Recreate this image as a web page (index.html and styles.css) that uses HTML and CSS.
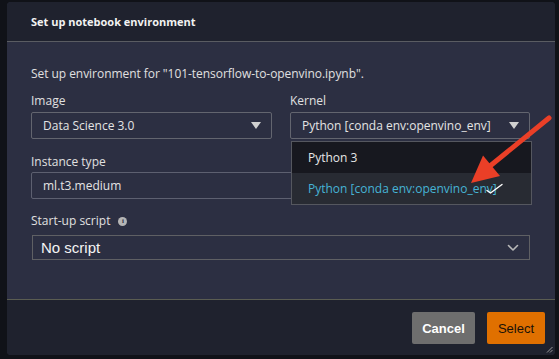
FILE: index.html
```html
<!DOCTYPE html>
<html>
<head>
<meta charset="utf-8">
<link rel="stylesheet" href="styles.css">
</head>
<body>
<div class="dialog">
  <div class="header"><span class="title">Set up notebook environment</span></div>
  <div class="content">
    <p class="desc">Set up environment for "101-tensorflow-to-openvino.ipynb".</p>
    <div class="row">
      <div class="field">
        <div class="label">Image</div>
        <div class="select"><span>Data Science 3.0</span><span class="tri"></span></div>
      </div>
      <div class="field kernel">
        <div class="label">Kernel</div>
        <div class="select"><span>Python [conda env:openvino_env]</span><span class="tri"></span></div>
        <div class="menu">
          <div class="item">Python 3</div>
          <div class="item active">Python [conda env:openvino_env]
            <svg class="check" width="18" height="12" viewBox="0 0 18 12"><path d="M1 7.5 L4.5 10 L16 1.5" fill="none" stroke="#fff" stroke-width="1.4" stroke-linecap="round" stroke-linejoin="round"/></svg>
          </div>
        </div>
      </div>
    </div>
    <div class="label mt15">Instance type</div>
    <div class="input">ml.t3.medium</div>
    <div class="label mt14">Start-up script <span class="info">i</span></div>
    <div class="script-select"><span>No script</span>
      <svg width="12" height="8" viewBox="0 0 12 8"><path d="M1.5 1.5 L6 6 L10.5 1.5" fill="none" stroke="#b8b8b8" stroke-width="1.6" stroke-linecap="round" stroke-linejoin="round"/></svg>
    </div>
  </div>
  <div class="footer">
    <button class="btn cancel">Cancel</button>
    <button class="btn select-btn">Select</button>
  </div>
  <svg class="grip" width="7" height="7" viewBox="0 0 7 7"><path d="M1 6.5 L6.5 1 M4 6.5 L6.5 4" stroke="#aaa" stroke-width="0.9"/></svg>
</div>
<svg class="arrow" width="559" height="359" viewBox="0 0 559 359">
  <line x1="549" y1="118" x2="490" y2="166" stroke="#ea3f27" stroke-width="5" stroke-linecap="round"/>
  <polygon points="471,183 483,155.5 500,176" fill="#ea3f27"/>
</svg>
</body>
</html>
```
FILE: styles.css
```css
html, body { margin: 0; padding: 0; }
body {
  background: #101218;
  width: 559px;
  height: 359px;
  position: relative;
  overflow: hidden;
  font-family: "Open Sans", "Noto Sans", sans-serif;
  color: #e2e2e2;
}
.dialog {
  position: absolute;
  left: 7px;
  top: 2px;
  width: 548px;
  height: 353px;
  border-radius: 4px;
  background: #2c2f42;
  display: flex;
  flex-direction: column;
  overflow: visible;
}
.header {
  height: 39px;
  background: #1f222e;
  border-bottom: 1px solid #5a5c62;
  border-radius: 4px 4px 0 0;
  display: flex;
  align-items: center;
  padding-left: 24px;
  flex: none;
}
.title {
  font-size: 11px;
  font-weight: 700;
  color: #f2f2f2;
}
.content {
  flex: 1;
  padding: 24px 25px 0 24px;
  display: flex;
  flex-direction: column;
}
.desc {
  margin: 0;
  font-size: 12px;
  letter-spacing: -0.05px;
  line-height: 16px;
  color: #e0e0e0;
}
.row {
  display: flex;
  gap: 18px;
  margin-top: 11px;
}
.field { width: 241px; position: relative; }
.kernel { width: 240px; }
.label {
  font-size: 12px;
  line-height: 16px;
  color: #e0e0e0;
  display: flex;
  align-items: center;
}
.mt15 { margin-top: 15px; }
.mt14 { margin-top: 14px; }
.select {
  margin-top: 3px;
  height: 27px;
  box-sizing: border-box;
  border: 1px solid #63656f;
  border-radius: 2px;
  display: flex;
  align-items: center;
  justify-content: space-between;
  padding: 0 10px 0 11px;
  font-size: 12px;
  color: #e4e4e4;
}
.tri {
  width: 0; height: 0;
  border-left: 5px solid transparent;
  border-right: 5px solid transparent;
  border-top: 7px solid #d0d0d0;
}
.menu {
  position: absolute;
  left: 1px;
  top: 48px;
  width: 241px;
  box-sizing: border-box;
  border: 1px solid #55575f;
  background: #17181f;
  z-index: 2;
}
.item {
  height: 31px;
  display: flex;
  align-items: center;
  padding-left: 16px;
  font-size: 12px;
  color: #e6e6e6;
  position: relative;
}
.item.active {
  background: #282b33;
  color: #46b4d6;
  height: 31px;
}
.check {
  position: absolute;
  left: 194px;
  top: 10px;
}
.input {
  margin-top: 2px;
  height: 27px;
  box-sizing: border-box;
  border: 1px solid #5d6070;
  border-radius: 2px;
  display: flex;
  align-items: center;
  padding-left: 11px;
  font-size: 12px;
  color: #e4e4e4;
}
.info {
  display: inline-flex;
  width: 9px;
  height: 9px;
  border-radius: 50%;
  background: #b5b5b5;
  color: #2c2f42;
  font-size: 7px;
  font-weight: 700;
  font-family: "Liberation Serif", serif;
  align-items: center;
  justify-content: center;
  margin-left: 8px;
  line-height: 1;
}
.script-select {
  margin-top: 6px;
  margin-left: 1px;
  height: 25px;
  box-sizing: border-box;
  border: 1px solid #5f6064;
  display: flex;
  align-items: center;
  justify-content: space-between;
  padding: 0 10px 0 8px;
  font-family: "Liberation Sans", Arial, sans-serif;
  font-size: 15px;
  color: #f4f4f4;
}
.footer {
  flex: none;
  height: 56px;
  box-sizing: border-box;
  border-top: 1px solid #5b5d52;
  background: #1f222e;
  border-radius: 0 0 4px 4px;
  display: flex;
  justify-content: flex-end;
  align-items: flex-start;
  padding: 12px 10px 0 0;
  gap: 12px;
}
.btn {
  height: 32px;
  border: none;
  border-radius: 2px;
  font-family: "Liberation Sans", Arial, sans-serif;
  font-size: 13px;
  padding: 0;
}
.cancel {
  width: 63px;
  background: #6e6e6e;
  color: #ffffff;
  font-weight: 700;
}
.select-btn {
  width: 58px;
  background: #e07000;
  color: #1a1208;
}
.grip {
  position: absolute;
  right: 2px;
  bottom: 2px;
}
.arrow {
  position: absolute;
  left: 0;
  top: 0;
  pointer-events: none;
  z-index: 5;
}
```
